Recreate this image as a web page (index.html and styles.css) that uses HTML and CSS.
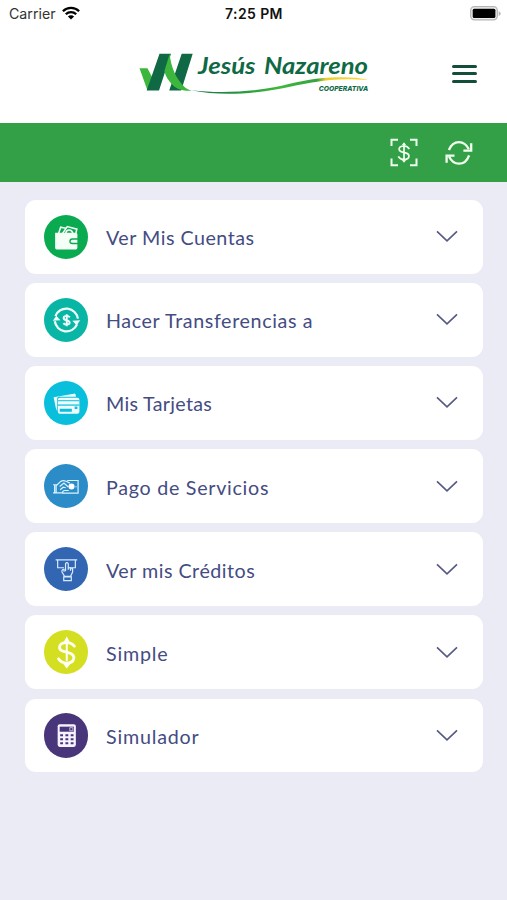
FILE: index.html
```html
<!DOCTYPE html>
<html lang="es">
<head>
<meta charset="utf-8">
<meta name="viewport" content="width=device-width, initial-scale=1">
<title>Jesús Nazareno Cooperativa</title>
<link rel="stylesheet" href="styles.css">
</head>
<body>
<div class="status">
  <div class="carrier"><span>Carrier</span>
    <svg width="18" height="14" viewBox="0 0 18 14" fill="none" stroke="#000" stroke-width="2.3"><path d="M.9 5.3a11.5 11.5 0 0 1 16.2 0M3.8 8.3a7.4 7.4 0 0 1 10.4 0"/><path d="M9 13.6 5.9 10.5a4.4 4.4 0 0 1 6.2 0z" fill="#000" stroke="none"/></svg>
  </div>
  <div class="time">7:25 PM</div>
  <svg class="battery" width="31" height="15" viewBox="0 0 31 15"><rect x=".7" y=".7" width="26.6" height="13.2" rx="3.8" fill="#eee" stroke="#b5b5b5" stroke-width="1.3"/><rect x="2.7" y="2.7" width="22.7" height="9.4" rx="1.5"/><path d="M28.7 5v5q2-1 2-2.5T28.7 5z" fill="#b5b5b5"/></svg>
</div>
<header class="header">
  <svg class="logo" width="230" height="44" viewBox="139 52 230 44" role="img" aria-label="Jesús Nazareno Cooperativa">
    <defs><linearGradient id="swoosh"><stop offset="0" stop-color="#147344"/><stop offset=".2" stop-color="#218c45"/><stop offset=".5" stop-color="#3fb83b"/><stop offset=".71" stop-color="#35a342"/><stop offset=".76" stop-color="#e8cf31"/><stop offset="1" stop-color="#ffd72f"/></linearGradient></defs>
    <path d="M139.500 68.300h8l4.500 8.800-4.500 13.400z" fill="#3db63d"/>
    <path d="M159.500 53.800h11.500l-12 36.800h-12.300zM181.700 53.800h11l-11.500 36.800h-12z" fill="#0f6945"/>
    <path d="M169.700 53.800c1 13 6.500 25 14.600 33 1.500 1.800 4.500 3.200 7.500 3.900-8 .5-14.800-1.300-18.700-5.200-4.500-4.500-7.500-9-8.700-14.500z" fill="#3db63d"/>
    <path d="M191 90.200c28 3.300 58 1.800 84.500-3.200 20-4 35-8.700 55-9.400 14-.6 27-.5 38 2.500-14-1.200-27-1.300-38-.2-18 1.500-35 6-55 9.500-29 5.200-59 6-84.500.8z" fill="url(#swoosh)"/>
    <g fill="#0f6945" font-style="italic" font-weight="700">
      <text x="198" y="74.200" font-family="Lato, sans-serif" font-size="23" textLength="57.500" lengthAdjust="spacingAndGlyphs">Jesús</text>
      <text x="264" y="74.200" font-family="Lato, sans-serif" font-size="23" textLength="104" lengthAdjust="spacingAndGlyphs">Nazareno</text>
      <text x="318.700" y="90.700" font-family="Inter, sans-serif" font-size="6.600" font-weight="800" textLength="49.500" lengthAdjust="spacingAndGlyphs">COOPERATIVA</text>
    </g>
  </svg>
  <button class="menu" aria-label="Menú"><i></i><i></i><i></i></button>
</header>
<nav class="toolbar">
  <button aria-label="Escanear"><svg width="28" height="29" viewBox="0 0 28 29" fill="none" stroke="#f1ffef" stroke-width="2"><path d="M1.500 8V1.700H8M20 1.700h6.500V8M26.500 20.500v6.800H20M8 27.300H1.500v-6.800"/><path d="M14 5v19M19.300 11c-1.200-2.200-3-3-5.300-3-5.800 0-6.500 4.900-1.500 6.100l3 .8c5.300 1.400 4.200 6.600-1.500 6.600-2.800 0-4.500-1-5.700-3.200" stroke-width="1.700"/><path d="m11.700 7.300 2.300-3 2.300 3zM11.700 21.700l2.300 3 2.300-3z" fill="#f1ffef" stroke="none"/></svg></button>
  <button aria-label="Actualizar"><svg width="28" height="26" viewBox="0 0 28 26" fill="none" stroke="#f1ffef" stroke-width="2.300"><path d="M3.900 10C6 4.700 9.500 2.100 14 2.100c4.300 0 7.400 2.400 9.800 7M24.100 15.300c-1.900 5.200-5.600 8.400-10.100 8.400-4.500 0-7.800-2.700-10-7.200"/><path d="M26.200 3.300v7.300h-7.800M1.600 22.700v-7.100h7.900"/></svg></button>
</nav>
<main class="list">
  <section class="card">
    <span class="icon wallet"><svg viewBox="0 0 44 44"><path d="M11 17.500h20.500q1.500 0 1.500 1.500v4h-5a3 3 0 0 0 0 6h5v3.500q0 1.500-1.500 1.500h-19q-1.500 0-1.500-1.500z" fill="#f4fff6"/><path d="M28 24.500h5v3h-5a1.500 1.500 0 0 1 0-3z" fill="#f4fff6"/><g fill="none" stroke="#f4fff6" stroke-width="1.500"><path d="m14.500 18 2-6 5 1M18.500 18l4.500-6.500 9.500 2.500-1 4M21.500 18c.5-4.200 6-4.500 7 0"/></g></svg></span>
    <span class="label l1">Ver Mis Cuentas</span><svg class="chevron" viewBox="0 0 22 13"><path d="m1 1.300 10 9.500 10-9.500"/></svg>
  </section>
  <section class="card">
    <span class="icon transfer"><svg viewBox="0 0 44 44" fill="none" stroke="#f1fffd" stroke-width="2.200"><path d="M11.300 18A11.500 11.500 0 0 1 33.500 20.500M32.700 26A11.500 11.500 0 0 1 10.700 23"/><path d="m8.700 22.500 3.500-5 4 4.500zM35.800 22l-3.500 5-4.300-4.500z" fill="#f1fffd" stroke="none"/><path d="M22.500 16v12M25.500 19.200c-.8-1-1.800-1.500-3-1.500-4 0-4 3.600-.5 4.200 4.400.8 4.400 4.400.4 4.400-1.500 0-2.500-.5-3.200-1.500" stroke-width="1.900"/></svg></span>
    <span class="label l2">Hacer Transferencias a</span><svg class="chevron" viewBox="0 0 22 13"><path d="m1 1.300 10 9.500 10-9.500"/></svg>
  </section>
  <section class="card">
    <span class="icon cards"><svg viewBox="0 0 44 44"><path d="m9.500 16 20-3.500q1.500-.2 1.800 1.200l.3 1.800H15q-2 0-2 2v12.300l-1.300-3z" fill="#effdff"/><rect x="13.700" y="16.500" width="21.300" height="16" rx="2" fill="#effdff"/><path d="M13.700 19.500H35" stroke="#09bfdb" stroke-width="1"/><path d="M13.700 23.800H35" stroke="#09bfdb" stroke-width="1.200"/><path d="M15.500 27.500h12v3h-12zM30.300 25.300H33v2.300h-2.700z" fill="#09bfdb"/></svg></span>
    <span class="label l3">Mis Tarjetas</span><svg class="chevron" viewBox="0 0 22 13"><path d="m1 1.300 10 9.500 10-9.500"/></svg>
  </section>
  <section class="card">
    <span class="icon pay"><svg viewBox="0 0 44 44" fill="none" stroke="#d9f3ff" stroke-width="1.200"><path d="M9 20.500h3v8H9M10.500 20.500v8M12 21.500l4.500-4.300c1.400-1 3-1 5.500-.1l3.500 1.800M12 28.500h6.500M15.500 22.200l4.200-3.400 4.300 4M16 25.500l3-2.500 2.500.5"/><path d="M23 16.300h10.700v12.400H18.500c-.3-1.500.7-2.500 2-2.500h4"/><circle cx="27.200" cy="22.300" r="3" fill="#fff" stroke="none"/><path d="M31 22.500h1.200"/></svg></span>
    <span class="label l4">Pago de Servicios</span><svg class="chevron" viewBox="0 0 22 13"><path d="m1 1.300 10 9.500 10-9.500"/></svg>
  </section>
  <section class="card">
    <span class="icon credit"><svg viewBox="0 0 44 44" fill="none" stroke="#d6eaff" stroke-width="1.200"><path d="M11.500 12.800h21.300M13.500 13v7.500h6.300M25 20.500h6V13"/><path d="M19.800 24.500v-2.300c-2 .2-2.300 1-2 2.500l2.500 4.300h6l2-4.200v-4.200M21.300 24v-7.500q1.500-2 2.700 0v6M24 20.500h2.200v3M26.200 21.500h2M19.500 29.500v3.700h7.500v-3.700z"/></svg></span>
    <span class="label l5">Ver mis Créditos</span><svg class="chevron" viewBox="0 0 22 13"><path d="m1 1.300 10 9.500 10-9.500"/></svg>
  </section>
  <section class="card">
    <span class="icon simple"><svg viewBox="0 0 44 44" fill="none" stroke="#fffff3" stroke-width="2.800" stroke-linecap="round"><path d="M30 16c-1.800-2.300-4.400-3.500-7.500-3.500-8.500 0-9.500 7.200-2.200 9l4.400 1.200c7.500 2.200 5.600 10-2.200 10-3.700 0-6.400-1.500-8.200-4.200"/><path d="M22.500 10v20" stroke-width="2"/><path d="m19.500 11.500 3-5 3 5zM19 33.500l3.500 4.500 3.500-4.500z" fill="#fffff3" stroke="none"/></svg></span>
    <span class="label l6">Simple</span><svg class="chevron" viewBox="0 0 22 13"><path d="m1 1.300 10 9.500 10-9.500"/></svg>
  </section>
  <section class="card">
    <span class="icon calculator"><svg viewBox="0 0 44 44"><rect x="13.500" y="11" width="18" height="22.500" rx="2" fill="#f7f2ff"/><path d="M15.500 13.500h14v5h-14z" fill="#493579"/><path d="M25.500 14.500h3v3h-3z" fill="none" stroke="#d9cee9" stroke-width=".8"/><path d="M16 22h2.800m2.400 0H24m2.400 0h2.800M16 26h2.800m2.400 0H24m2.400 0h2.800M16 30h2.800m2.400 0H24m2.400 0h2.800" stroke="#493579" stroke-width="2"/></svg></span>
    <span class="label l7">Simulador</span><svg class="chevron" viewBox="0 0 22 13"><path d="m1 1.300 10 9.500 10-9.500"/></svg>
  </section>
</main>
</body>
</html>
```
FILE: styles.css
```css
* { box-sizing: border-box; }
body { margin: 0; min-height: 900px; background: #ebebf6; font-family: Lato, sans-serif; }
button { display: flex; padding: 0; border: 0; background: none; }
svg { display: block; flex: none; }
.status { height: 28px; background: #fff; display: grid; grid-template-columns: 1fr auto 1fr; align-items: center; padding: 0 6px 0 9px; font: 14.2px/28px Inter, sans-serif; color: #111; }
.carrier { display: flex; align-items: center; gap: 6px; color: #333; }
.carrier svg { margin-top: -3px; }
.time { font-weight: 600; font-size: 14px; letter-spacing: .4px; margin-right: 2px; }
.battery { justify-self: end; margin-top: -2px; }
.header { height: 95px; background: #fff; display: flex; justify-content: space-between; align-items: flex-start; padding: 24px 30px 0 139px; }
.menu { margin-top: 13px; flex-direction: column; gap: 4.200px; width: 25px; }
.menu i { height: 3.100px; width: 25px; border-radius: 2px; background: #124e3b; }
.toolbar { height: 59px; background: #33a047; display: flex; justify-content: flex-end; align-items: center; gap: 27px; padding: 0 34.500px 0 0; }
.list { display: flex; flex-direction: column; gap: 9.600px; padding: 18px 24.500px 0 25px; }
.card { height: 73.500px; display: flex; align-items: center; background: #fff; border-radius: 11px; padding: 0 25px 0 18.500px; }
.icon { width: 44.500px; height: 44.500px; border-radius: 50%; }
.icon svg { width: 44.500px; height: 44.500px; }
.wallet { background: #09aa50; }
.transfer { background: #09b6a5; }
.cards { background: #09bfdb; }
.pay { background: #2c8cc7; }
.credit { background: #3266b2; }
.simple { background: #d3df20; }
.calculator { background: #493579; }
.label { flex: 1; margin: 3px 0 0 18px; font-size: 19.700px; line-height: 28px; color: #444c82; white-space: nowrap; }
.l1 { letter-spacing: .5px; }
.l2 { letter-spacing: .62px; }
.l3 { letter-spacing: .3px; }
.l4 { letter-spacing: .72px; }
.l5 { letter-spacing: .5px; }
.l6 { letter-spacing: .8px; }
.l7 { letter-spacing: .8px; }
.chevron { width: 22px; height: 13px; fill: none; stroke: #555984; stroke-width: 1.600; }
```
